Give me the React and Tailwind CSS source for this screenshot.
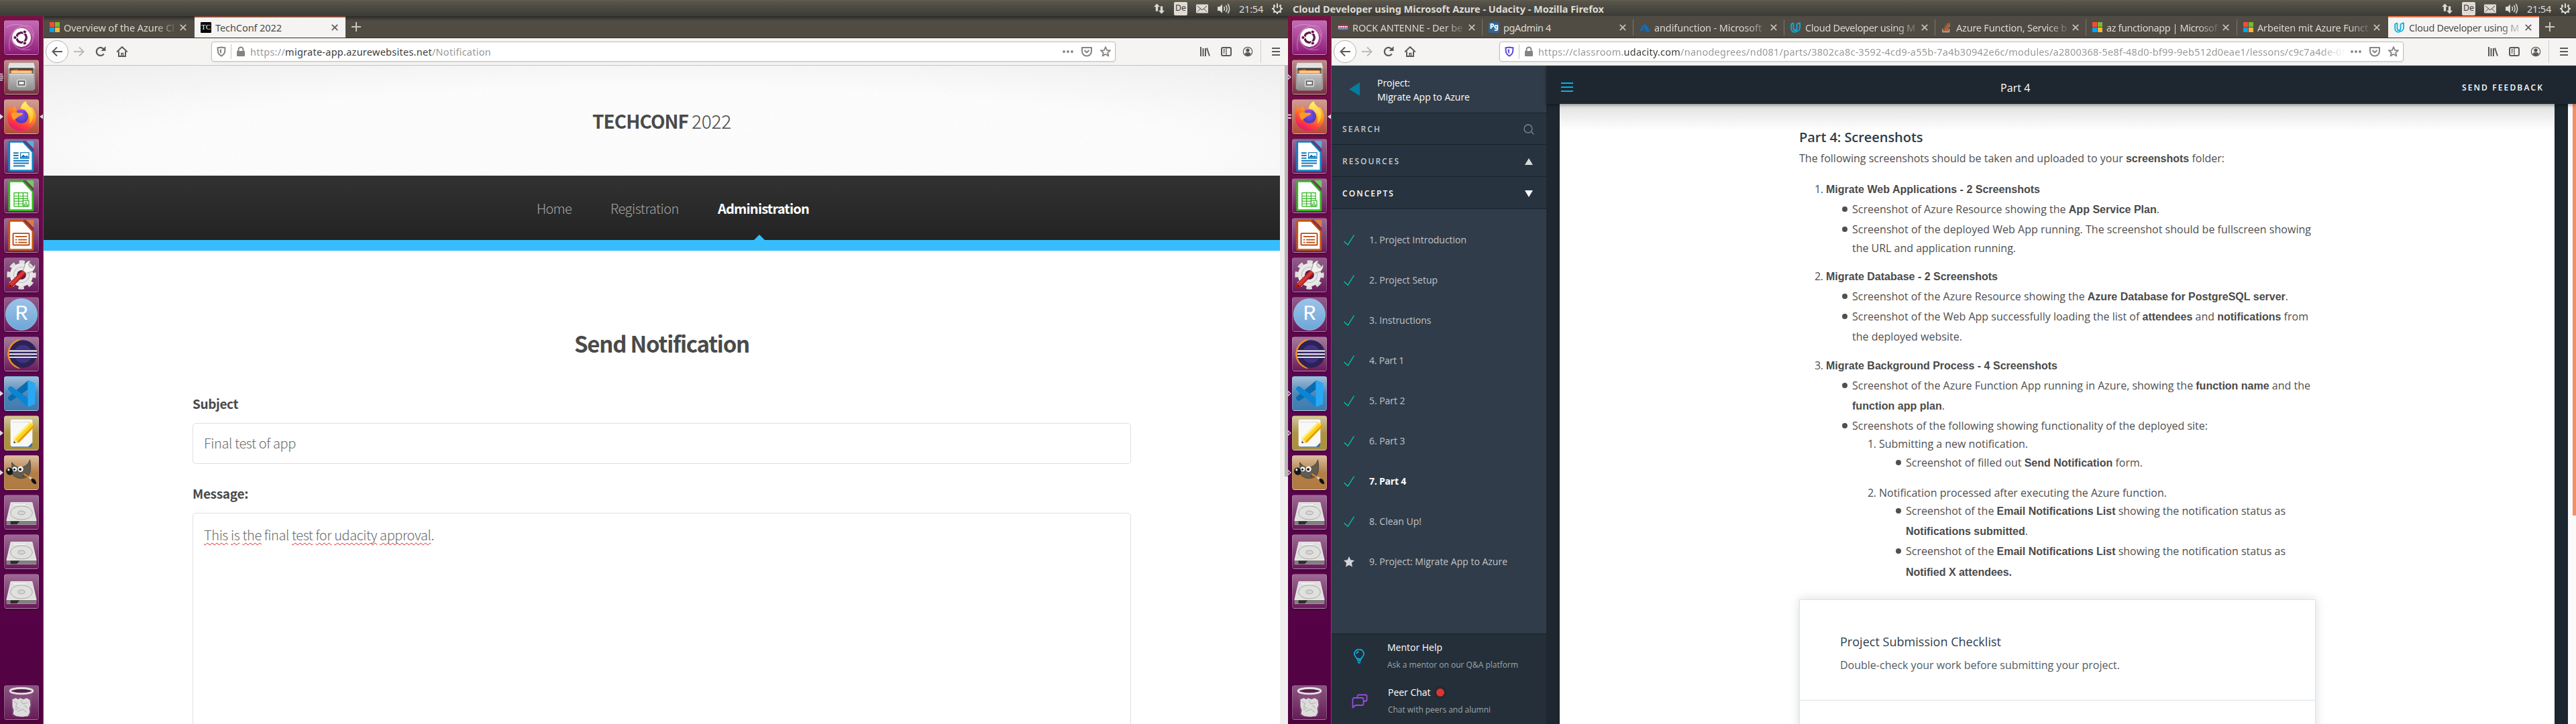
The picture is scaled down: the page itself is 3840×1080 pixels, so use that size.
import React, { useLayoutEffect, useRef, useState } from "react";

/* Text set to an exact advance width by adjusting its tracking. */
function Fit({ w, className = "", children }) {
  const ref = useRef(null);
  const [tracking, setTracking] = useState(0);
  useLayoutEffect(() => {
    const el = ref.current;
    el.style.letterSpacing = "0px";
    const natural = el.getBoundingClientRect().width;
    const next = (w - natural) / el.textContent.length;
    el.style.letterSpacing = next + "px";
    setTracking(next);
  }, [w]);
  return (
    <span ref={ref} className={"inline-block shrink-0 whitespace-pre " + className} style={{ letterSpacing: tracking + "px" }}>
      {children}
    </span>
  );
}

/* ---------- dock ---------- */

const UbuntuIcon = () => (
  <svg viewBox="0 0 52 52" className="size-full">
    <g fill="none" stroke="#e9b6df" strokeOpacity=".45" strokeWidth="1.3">
      <path d="M8 46C4 26 12 12 28 8s20 12 14 26M2 10c14-8 36-6 42 14 1 12-8 20-20 20M10 28c4 14 16 20 30 16" />
    </g>
    <circle cx="26" cy="26" r="14.5" fill="#fff" />
    <circle cx="26" cy="26" r="7.6" fill="none" stroke="#5e1a4d" strokeWidth="3.6" />
    <g stroke="#fff" strokeWidth="1.4">
      <path d="M26 26 13 26M26 26l6.5-11M26 26l6.5 11" />
    </g>
    <circle cx="26" cy="26" r="5.6" fill="#fff" />
    <g fill="#5e1a4d" stroke="#fff" strokeWidth="1">
      <circle cx="16" cy="26" r="2.7" />
      <circle cx="31" cy="17.2" r="2.7" />
      <circle cx="31" cy="34.8" r="2.7" />
    </g>
  </svg>
);

const FilesIcon = () => (
  <svg viewBox="0 0 52 52" className="size-full">
    <defs>
      <linearGradient id="cab" x1="0" y1="0" x2="0" y2="1">
        <stop offset="0" stopColor="#c4c4c4" />
        <stop offset="1" stopColor="#8b8b8b" />
      </linearGradient>
    </defs>
    <path d="M7 4h38l2 8v33H5V12z" fill="#9d9d9d" />
    <path d="M7 4h38l2 8H5z" fill="#e2e2e0" />
    <rect x="8" y="12" width="36" height="10" fill="#3c3b39" />
    <path d="M10 15l9-1 2 1h21v7H9z" fill="#e6834a" />
    <rect x="9" y="16" width="34" height="6" fill="#f09a3c" />
    <rect x="11" y="17.4" width="30" height="1.4" fill="#fff" />
    <rect x="7" y="21" width="38" height="26" fill="url(#cab)" />
    <rect x="7" y="21" width="38" height="1.4" fill="#dcdcdc" />
    <rect x="19" y="30" width="14" height="11" rx="2" fill="#bdbdbd" stroke="#d9d9d9" />
    <rect x="21.5" y="32.5" width="9" height="5.5" fill="#eee" stroke="#4a4a4a" strokeWidth="1.3" />
  </svg>
);

const FirefoxIcon = () => (
  <svg viewBox="0 0 52 52" className="size-full">
    <defs>
      <linearGradient id="fx" x1=".8" y1="0" x2=".3" y2="1">
        <stop offset="0" stopColor="#ffe24a" />
        <stop offset=".4" stopColor="#ff9a1f" />
        <stop offset=".75" stopColor="#ff3d3d" />
        <stop offset="1" stopColor="#e3127b" />
      </linearGradient>
      <linearGradient id="fxt" x1="0" y1="0" x2="0" y2="1">
        <stop offset="0" stopColor="#fff36b" />
        <stop offset="1" stopColor="#ffb52a" />
      </linearGradient>
      <radialGradient id="fxg" cx=".5" cy=".4" r=".6">
        <stop offset="0" stopColor="#7c4df5" />
        <stop offset="1" stopColor="#4b3ab8" />
      </radialGradient>
    </defs>
    <path d="M5 15c1-2 3-4 4-5 0 2 1 3 2 4 2-2 4-3 6-4-1 2 0 4 1 6h6c0-7 5-12 9-14 0 5 4 6 7 10l2-1c5 6 7 13 6 19-1 11-11 18-22 18S4 40 4 28c0-5 0-9 1-13z" fill="url(#fx)" />
    <path d="M25 13C26 7 30 3 33 2c0 5 5 7 9 13 4 8 2 18-4 22 3-10-1-20-13-24z" fill="url(#fxt)" />
    <circle cx="26" cy="26" r="10.5" fill="url(#fxg)" />
    <path d="M18 17c4-3 11-3 16 0-4 0-5 2-7 3z" fill="#9a3df0" />
    <path d="M10 21c4-2 9-2 11-1 3 0 6 0 8 1-2 3-5 4-8 5-2 3-5 3-6 6-3-3-5-7-5-11z" fill="#ff9b24" />
  </svg>
);

function OfficeIcon({ edge, light, dark, children }) {
  return (
    <svg viewBox="0 0 52 52" className="size-full">
      <path d="M8.500 2H31l14 16v30a2 2 0 0 1-2 2H8.500a3 3 0 0 1-3-3V5a3 3 0 0 1 3-3z" fill={edge} />
      <path d="M8.500 5H28l14 15v27H8.500z" fill="#fff" />
      <path d="M28 2l17 18V14L35 2z" fill="#6a1550" opacity=".55" />
      <path d="M33 2h10a2 2 0 0 1 2 2v10z" fill={light} />
      <g stroke={dark} fill="none" strokeWidth="2">{children}</g>
    </svg>
  );
}

const WriterIcon = () => (
  <OfficeIcon edge="#1181c3" light="#58aedd" dark="#0f77b8">
    <path d="M13.500 21h8M13.500 25h8M13.500 29h8M13.500 33h24M13.500 37h24M13.500 41h18" />
    <rect x="24.500" y="20.500" width="13" height="9" strokeWidth="1.200" />
    <path d="M25 28l4-4 3 3 2-2 3 3z" fill="#0f77b8" strokeWidth="1" />
  </OfficeIcon>
);
const CalcIcon = () => (
  <OfficeIcon edge="#33b821" light="#6fce5e" dark="#2db51c">
    <path d="M14.500 21.500h21v21h-21zM14.500 26.500h21M14.500 30.500h21M14.500 34.500h21M14.500 38.500h21M21.500 21v21M28.500 21v21" strokeWidth="1.200" />
    <rect x="28.500" y="33.500" width="9" height="9" fill="#fff" strokeWidth="1.200" />
    <path d="M30.500 42v-4M33 42v-7M35.500 42v-3" strokeWidth="1.400" />
  </OfficeIcon>
);
const ImpressIcon = () => (
  <OfficeIcon edge="#c45510" light="#dc7d44" dark="#b84a10">
    <rect x="13" y="23" width="25" height="18" rx="1" />
    <path d="M16.500 28h18M21 33h13.500M21 37h13.500M16.500 33h2.500M16.500 37h2.500" strokeWidth="1.800" />
  </OfficeIcon>
);

const SettingsIcon = () => (
  <svg viewBox="0 0 52 52" className="size-full">
    <circle cx="26" cy="26" r="19.500" fill="none" stroke="#dededc" strokeWidth="6" strokeDasharray="8.500 6.800" strokeDashoffset="4" />
    <circle cx="26" cy="26" r="12.500" fill="none" stroke="#e8e8e6" strokeWidth="11" />
    <circle cx="26" cy="26" r="12" fill="none" stroke="#bfbfbd" strokeWidth="1.200" />
    <circle cx="26" cy="26" r="7" fill="#5f1a4d" />
    <path d="M8.500 43l20-20" stroke="#a31717" strokeWidth="7.500" strokeLinecap="round" />
    <path d="M8.500 42.500l20-20" stroke="#d43a33" strokeWidth="5" strokeLinecap="round" />
    <circle cx="8.500" cy="43" r="1.700" fill="#6b0f0f" />
    <path d="M28 19c2-2 2-4 3-8 1-4 5-7 9-7l-3 6 2 4 4 1 4-5c1 4-1 9-5 11-3 1-6 1-8 3z" fill="#f1f1f0" stroke="#8a8a8a" strokeWidth=".900" />
  </svg>
);

const RIcon = () => (
  <div className="flex size-full items-center justify-center">
    <div className="flex size-12 items-center justify-center rounded-full border border-[#8cc0ea] bg-linear-to-b from-[#9cc3e8] to-[#6fa6d8] font-['Liberation_Mono',monospace] text-[32px] leading-none text-white">
      R
    </div>
  </div>
);

const EclipseIcon = () => (
  <svg viewBox="0 0 52 52" className="size-full">
    <path d="M23 3.500A23 23 0 0 0 23 48.500 25 25 0 0 1 23 3.500z" fill="#f8941e" stroke="#f8941e" />
    <circle cx="28.500" cy="26" r="21.500" fill="#2c2255" />
    <circle cx="28.500" cy="26" r="14" fill="#423285" />
    <path d="M7 21.300h43M7 26.200h43M7 31.100h43" stroke="#2c2255" strokeWidth="4" />
    <path d="M7 21.300h43M7 26.200h43M7 31.100h43" stroke="#fff" strokeWidth="2" />
  </svg>
);

const CodeIcon = () => (
  <svg viewBox="0 0 52 52" className="size-full">
    <path d="M36 6v14L11 37c-2 1-4 0-5-2s-1-3 0-4z" fill="#0a6cb0" />
    <path d="M6 17c1-2 4-3 6-1l24 17v14L6 21c-1-1-1-3 0-4z" fill="#0a86d4" />
    <path d="M36 5l11 5v32l-11 5z" fill="#29a8f3" />
  </svg>
);

const NotesIcon = () => (
  <svg viewBox="0 0 52 52" className="size-full">
    <rect x="9.500" y="6" width="33" height="42" rx="3" fill="#47719c" />
    <path d="M12 5h28a3 3 0 0 1 3 3v32l-7 7H12a3 3 0 0 1-3-3V8a3 3 0 0 1 3-3z" fill="#f8f8f6" />
    <path d="M12 9h28" stroke="#b9b9b9" strokeDasharray="1.500 1.500" />
    <path d="M43 40h-5a2 2 0 0 0-2 2v5z" fill="#fff" stroke="#ddd" strokeWidth=".600" />
    <path d="M14 35l6.500 6-6 .500z" fill="#e9cf9b" />
    <path d="M14 38.500l3 3h-3z" fill="#333" />
    <path d="M14 34L39 8.500l8 6.500-25 26z" fill="#fbd420" />
    <path d="M19 39.500L45 13l2 2-25 26z" fill="#e39d0c" />
    <path d="M14 34L39 8.500l2 2L16 36z" fill="#fff07a" />
  </svg>
);

const GimpIcon = () => (
  <svg viewBox="0 0 52 52" className="size-full">
    <path d="M11 10c3 4 7 8 12 8 8 0 14-5 16-12 2 10 2 22-4 26-7 5-18 3-23-3z" fill="#625c50" stroke="#3c382f" strokeWidth=".800" />
    <circle cx="15.500" cy="20.500" r="3.600" fill="#f4f4f4" />
    <circle cx="24.500" cy="20.500" r="4.400" fill="#f4f4f4" />
    <circle cx="15" cy="21" r="1.600" fill="#111" />
    <circle cx="24" cy="21" r="2" fill="#111" />
    <ellipse cx="7.500" cy="24" rx="5.200" ry="6" fill="#14181b" transform="rotate(-20 7.500 24)" />
    <ellipse cx="6" cy="21.500" rx="1.600" ry="2" fill="#e8eef2" />
    <path d="M28 29c4 0 2 2 0 3" stroke="#222" fill="none" />
    <path d="M29 28l10 6" stroke="#e08a2a" strokeWidth="2.200" />
    <path d="M38 33l4 3" stroke="#ccc" strokeWidth="3.400" />
    <path d="M41 36c4-2 8 2 8 8-4 0-8-3-8-8z" fill="#0e0e0e" />
  </svg>
);

const DriveIcon = () => (
  <svg viewBox="0 0 52 52" className="size-full">
    <path d="M9.500 11h33l6.500 28v6.500H3V39z" fill="#c9c9c7" />
    <path d="M9.500 11h33L49 39H3z" fill="#dfdfdd" stroke="#f3f3f2" strokeWidth=".800" />
    <ellipse cx="26" cy="27" rx="17" ry="10.500" fill="#e0e0de" stroke="#a4a4a2" />
    <ellipse cx="26" cy="27" rx="5.500" ry="3" fill="#d6d6d4" stroke="#a4a4a2" />
    <path d="M14 14c6 0 14 2 18 0" stroke="#f6f6f6" strokeWidth="1.500" fill="none" />
    <path d="M3 39.500h46V45H3z" fill="#7f7f7d" />
    <path d="M9 40h14l-4 5H9z" fill="#2d2d2d" />
    <path d="M3 39h46" stroke="#f5f5f5" />
  </svg>
);

const TrashIcon = () => (
  <svg viewBox="0 0 52 52" className="size-full">
    <path d="M9 11h34l-3 36c-6 2-22 2-28 0z" fill="#8f5a86" opacity=".45" />
    <ellipse cx="26" cy="8" rx="17.500" ry="4.300" fill="#5b1f50" stroke="#e4e4e2" strokeWidth="3" />
    <path d="M12 21l5-2 4 2 3-2 5 2 5-2 5 3 1 8-2 5 1 6-3 6-9 1-9-1-5-3 1-6-2-6z" fill="#dcdcdb" />
    <path d="M14 24l5 3-2 6 6 2M25 22l3 6 8-2M20 40l8-4 6 5M30 30l5 4M16 36l4 1" stroke="#b4b4b4" fill="none" strokeWidth="1.200" />
  </svg>
);

const apps = [
  { Icon: UbuntuIcon, tile: "from-[#c46bb6] to-[#8f1878]" },
  { Icon: FilesIcon, tile: "from-[#c08b8d] to-[#7c2f40]", many: true },
  { Icon: FirefoxIcon, tile: "from-[#d19c92] to-[#b54a35]", many: true, focus: true },
  { Icon: WriterIcon, tile: "from-[#9d6a95] to-[#6b195c]" },
  { Icon: CalcIcon, tile: "from-[#9d6a95] to-[#6b195c]" },
  { Icon: ImpressIcon, tile: "from-[#9d6a95] to-[#6b195c]" },
  { Icon: SettingsIcon, tile: "from-[#935c8b] to-[#6b195c]" },
  { Icon: RIcon, tile: "from-[#935c8b] to-[#6b195c]" },
  { Icon: EclipseIcon, tile: "from-[#a57a9e] to-[#6b195c]" },
  { Icon: CodeIcon, tile: "from-[#a5bfd6] via-[#4f86b8] to-[#3f7bb0]", running: true },
  { Icon: NotesIcon, tile: "from-[#d3c79c] via-[#ad9345] to-[#a98f3d]", running: true },
  { Icon: GimpIcon, tile: "from-[#dcbf9f] via-[#b37d46] to-[#b07a42]", running: true },
  { Icon: DriveIcon, tile: "from-[#9d6a95] to-[#6b195c]" },
  { Icon: DriveIcon, tile: "from-[#9d6a95] to-[#6b195c]" },
  { Icon: DriveIcon, tile: "from-[#9d6a95] to-[#6b195c]" },
];

const Tile = ({ Icon, tile }) => (
  <div className={"size-[52px] overflow-hidden rounded-[4px] border border-white/20 bg-linear-to-b shadow-[0_1px_3px_rgba(0,0,0,0.4)] " + tile}>
    <Icon />
  </div>
);

function Marker({ kind }) {
  return (
    <svg viewBox="0 0 6 12" className="absolute top-5 left-0 h-3 w-1.5">
      {kind === "lines3" && <path d="M0 1.500h4M0 4.500h5M0 7.500h5M0 10.500h4" stroke="#ddd" strokeWidth="1.500" />}
      {kind === "lines2" && <path d="M0 3.500h5M0 8h5" stroke="#ddd" strokeWidth="1.800" />}
      {kind === "solid" && <path d="M0 2l5 4-5 4z" fill="#ddd" />}
      {kind === "hollow" && <path d="M0 2.500l4 3.500-4 3.500z" fill="none" stroke="#ddd" strokeWidth="1.200" />}
    </svg>
  );
}

function Dock({ second }) {
  const markerFor = (app, i) => {
    if (i === 1) return second ? "hollow" : "lines3";
    if (i === 2) return second ? "lines2" : "solid";
    return app.running ? (second ? "hollow" : "solid") : null;
  };
  return (
    <aside className="flex h-[1056px] w-[65px] shrink-0 flex-col border-r border-[#8c3c6e] bg-linear-to-b from-[#7a0f43] via-[#5c0550] to-[#520242] pt-1.5 pb-1.5">
      <div className="flex flex-col gap-[7px]">
        {apps.map((app, i) => (
          <div key={i} className="relative pl-1.5">
            <Marker kind={markerFor(app, i)} />
            <Tile {...app} />
            {app.focus && (
              <svg viewBox="0 0 6 12" className="absolute top-5 right-0 h-3 w-1.5">
                <path d="M6 2.500L1 6l5 3.500z" fill="#ddd" />
              </svg>
            )}
          </div>
        ))}
      </div>
      <div className="mt-auto pl-1.5">
        <Tile Icon={TrashIcon} tile="from-[#8b5583] to-[#641a55]" />
      </div>
    </aside>
  );
}

/* ---------- system bar ---------- */

function SystemBar({ title }) {
  return (
    <div className="flex h-6 shrink-0 items-center border-t border-[#615e4e] bg-linear-to-b from-[#59564d] to-[#3c3b37] pr-[7px] text-[#dfdbd2]">
      {title && (
        <Fit w={464} className="ml-[7px] text-[14.5px] leading-5 font-bold">
          {title}
        </Fit>
      )}
      <svg viewBox="0 0 18 18" className="ml-auto size-[18px]" fill="currentColor">
        <path d="M5.500 1l5 5.500H7.500V13h-4V6.500H.500zM12.500 17l-5-5.500h3V5h4v6.500h3z" stroke="#45433c" strokeWidth=".600" />
      </svg>
      <div className="ml-[13px] flex h-5 w-5 items-center justify-center rounded-[2px] bg-[#dfdbd2] text-[12.5px] leading-none text-[#3c3b37]">De</div>
      <svg viewBox="0 0 18 14" className="ml-[13px] h-3.5 w-[18px]">
        <rect width="18" height="13" y=".500" rx="1" fill="#dfdbd2" />
        <path d="M2 3l7 6 7-6M2 11.500l4.500-4.500M16 11.500L11.500 7" stroke="#45433c" fill="none" />
      </svg>
      <svg viewBox="0 0 20 18" className="ml-3.5 h-[18px] w-5" fill="none" stroke="currentColor" strokeWidth="1.500">
        <path d="M0 6h3l4-3.500v13L3 12H0z" fill="currentColor" stroke="none" />
        <path d="M9.500 6c1.300 2 1.300 4 0 6M12.300 4c2.200 3 2.200 7 0 10M15.300 2c3 4.500 3 9.500 0 14" />
      </svg>
      <Fit w={36} className="ml-3 text-[14.5px] leading-5">21:54</Fit>
      <svg viewBox="0 0 18 18" className="ml-3 size-[18px]" fill="none" stroke="currentColor">
        <path d="M6 4.300a5.500 5.500 0 1 0 6 0" strokeWidth="2" />
        <path d="M9 1v7" strokeWidth="2" />
        <path d="M1 9h2M15 9h2M3.300 3.300l1.500 1.500M14.700 3.300l-1.500 1.500M3.300 14.700l1.500-1.500M14.700 14.700l-1.500-1.500M9 15v2" strokeWidth="2" />
      </svg>
    </div>
  );
}

/* ---------- browser chrome ---------- */

const MsIcon = () => (
  <div className="grid size-[15px] grid-cols-2 gap-px">
    <i className="bg-[#f94b31]" />
    <i className="bg-[#7cb832]" />
    <i className="bg-[#05a4ee]" />
    <i className="bg-[#fbb435]" />
  </div>
);
const TcIcon = () => (
  <div className="flex size-4 items-center justify-center rounded-[1px] bg-black font-['Liberation_Serif',serif] text-[11px] leading-none text-white">TC</div>
);
const RockIcon = () => (
  <svg viewBox="0 0 16 16" className="size-4">
    <path d="M0 5q8-2 16 0v4H0z" fill="#ea1d3c" />
    <path d="M0 9h16v2q-8 2-16 0z" fill="#1c76b8" />
    <path d="M1 7h14" stroke="#fff" strokeWidth="2" strokeDasharray="2.500 .800" />
    <path d="M1 9.800h14" stroke="#fff" strokeWidth="1" strokeDasharray="1 .700" />
  </svg>
);
const PgIcon = () => (
  <div className="flex size-4 items-center justify-center rounded-[2px] bg-[#326690] pb-0.5 text-[10.5px] leading-none font-extrabold tracking-[-0.5px] text-white">Pg</div>
);
const AzureIcon = () => (
  <svg viewBox="0 0 16 16" className="size-4">
    <path d="M8.500 2L4 6 .500 13h3.800z" fill="#0f6fc0" />
    <path d="M9 3l-2.200 6L10.500 13 4 14h12z" fill="#0f6fc0" />
  </svg>
);
const UdacityIcon = () => (
  <svg viewBox="0 0 16 16" className="size-4" fill="none" stroke="#06b3e0" strokeWidth="1.800" strokeLinejoin="round">
    <path d="M4.500 1.200L1.200 3v6.500c0 3.500 2.300 5.300 4.800 5.300 1.500 0 2.500-.500 3-1.200" />
    <path d="M4.500 1.200v8c0 2 1 3 2.500 3s2.500-1 2.500-3V3l4.500-1.800V8c0 3-2 5.500-5 5.800" />
  </svg>
);
const StackIcon = () => (
  <svg viewBox="0 0 16 16" className="size-4" fill="none">
    <path d="M2 10v4.500h9.500V10" stroke="#bcbbbb" strokeWidth="1.300" />
    <path d="M4 12.500h6M4 10.200l6 .700M4.600 7.500l5.600 1.900M6 4.700l5 3.500M8.300 2.400l3.500 4.700M11.200 1l1.300 5.500" stroke="#f0662c" strokeWidth="1.300" />
  </svg>
);

const CloseIcon = () => (
  <svg viewBox="0 0 10 10" className="size-2.5" fill="none" stroke="currentColor" strokeWidth="1.700">
    <path d="M.8.8l8.400 8.400M9.200.8L.8 9.200" />
  </svg>
);

function Tab({ icon, text, w, active, accent = "", sep, shade }) {
  return (
    <div
      className={
        "relative flex w-[225px] shrink-0 items-center pl-[9px] pt-px " +
        (active ? "bg-[#f5f4f2] text-[#4c4b49] " : "text-[#dbd8d1] ")
      }
    >
      {active && <div className={"absolute inset-x-0 top-0 " + accent} />}
      {sep && <div className="absolute top-[5px] right-0 h-6 w-px bg-[#7a776f]" />}
      {icon}
      <div
        className={
          "ml-1.5 w-[167px] overflow-hidden text-[14.5px] leading-6 " +
          (shade ? "[mask-image:linear-gradient(to_right,black_82%,rgba(0,0,0,0.15))]" : "")
        }
      >
        <Fit w={w}>{text}</Fit>
      </div>
      <div className={"ml-1.5 " + (active ? "text-[#5d5c5a]" : "text-[#c5c2bb]")}>
        <CloseIcon />
      </div>
    </div>
  );
}

const PlusIcon = () => (
  <svg viewBox="0 0 14 14" className="size-3.5 self-center text-[#c9c6bf]" stroke="currentColor" strokeWidth="2">
    <path d="M7 0v14M0 7h14" />
  </svg>
);

function Toolbar({ secure, children }) {
  return (
    <div className="flex h-[41px] shrink-0 items-center border-b border-[#c6c2be] bg-[#f5f4f2] text-[#5b5a58]">
      <div className="ml-[3px] flex size-[34px] shrink-0 items-center justify-center rounded-full border border-[#b5b3b0] bg-[#fdfdfd]">
        <svg viewBox="0 0 16 16" className="size-4" fill="none" stroke="currentColor" strokeWidth="2">
          <path d="M16 8H1.500M8 1.500L1.500 8 8 14.500" />
        </svg>
      </div>
      <svg viewBox="0 0 16 16" className="ml-2 size-4 text-[#bdbbb9]" fill="none" stroke="currentColor" strokeWidth="2">
        <path d="M0 8h14.500M8 1.500L14.500 8 8 14.500" />
      </svg>
      <svg viewBox="0 0 16 16" className="ml-4 size-4" fill="none" stroke="currentColor" strokeWidth="2.200">
        <path d="M12.800 11.300A6 6 0 1 1 13 5" />
        <path d="M15.500 0v7h-7z" fill="currentColor" stroke="none" />
      </svg>
      <svg viewBox="0 0 16 16" className="ml-4 size-4" fill="none" stroke="currentColor" strokeWidth="2">
        <path d="M0 8.500L8 1l8 7.500M3 7.500V15h10V7.500" />
        <path d="M7 15v-4.500h2.500V15" strokeWidth="1.500" />
      </svg>
      <div className="ml-[125px] flex h-[30px] w-[1348px] items-center rounded-[4px] border border-[#c3c0bc] bg-white pr-1.5 pl-1.5 text-[#858483] shadow-[0_1px_3px_rgba(0,0,0,0.08)]">
        <svg viewBox="0 0 16 16" className={"size-4 shrink-0 " + (secure ? "text-[#5b4be0]" : "text-[#858483]")} fill="none" stroke="currentColor" strokeWidth="2">
          <path d="M8 1.500c2 .500 4 .800 5.500.800 0 6-.500 10-5.500 12.200C3 12.300 2.500 8.300 2.500 2.300 4 2.300 6 2 8 1.500z" />
          <path d="M8 4.500v7c-2-1.300-2.500-3.500-2.500-6.500z" fill="currentColor" stroke="none" />
        </svg>
        <div className="ml-1.5 h-[22px] w-px bg-[#c9c7c4]" />
        <svg viewBox="0 0 16 16" className="ml-1.5 size-4 shrink-0" fill="none">
          <path d="M4.500 8V5a3.500 3.500 0 0 1 7 0v3" stroke="currentColor" strokeWidth="2" />
          <rect x="2" y="7" width="12" height="8" rx="1" fill="currentColor" />
        </svg>
        <div className="ml-1.5 flex w-[1206px] overflow-hidden text-[14.5px] leading-6 text-[#9a9998]">{children}</div>
        <svg viewBox="0 0 16 16" className="ml-auto size-4" fill="currentColor">
          <circle cx="2" cy="8" r="1.900" />
          <circle cx="8" cy="8" r="1.900" />
          <circle cx="14" cy="8" r="1.900" />
        </svg>
        <svg viewBox="0 0 16 16" className="ml-3 size-4" fill="none" stroke="currentColor" strokeWidth="2">
          <path d="M1 2h14v5.500a7 7 0 0 1-14 0z" strokeLinejoin="round" />
          <path d="M4.500 6L8 9.300 11.500 6" />
        </svg>
        <svg viewBox="0 0 16 16" className="ml-3 size-4" fill="none" stroke="currentColor" strokeWidth="1.800" strokeLinejoin="round">
          <path d="M8 1l2 4.800 5 .400-3.800 3.300 1.200 5L8 11.800l-4.400 2.700 1.200-5L1 6.200l5-.400z" />
        </svg>
      </div>
      <svg viewBox="0 0 16 16" className="ml-[125px] size-4" stroke="currentColor" strokeWidth="2">
        <path d="M2 1v14M5.500 3v12M9 3v12M11 2.500l4 12" />
      </svg>
      <svg viewBox="0 0 16 16" className="ml-4 size-4" fill="none" stroke="currentColor" strokeWidth="2">
        <rect x="1" y="2" width="14" height="12" rx="2" />
        <path d="M8 2v12M3.500 5h2.500M3.500 7.500h2.500M3.500 10h2" strokeWidth="1.300" />
      </svg>
      <svg viewBox="0 0 16 16" className="ml-4 size-4" fill="none" stroke="currentColor">
        <circle cx="8" cy="8" r="6.700" strokeWidth="1.200" />
        <circle cx="8" cy="6" r="2.700" fill="currentColor" stroke="none" />
        <path d="M3.500 11.500c0-1.500 1.500-2 2.500-2.300h4c1 .300 2.500.800 2.500 2.300a5 5 0 0 1-9 0z" fill="currentColor" stroke="none" />
      </svg>
      <div className="ml-[11px] h-[34px] w-px bg-[#d2cfcc]" />
      <svg viewBox="0 0 16 16" className="ml-3.5 size-4" stroke="currentColor" strokeWidth="2">
        <path d="M2 3h12M2 8h12M2 13h12" />
      </svg>
    </div>
  );
}

/* ---------- conference page ---------- */

const Wavy = ({ children }) => (
  <span className="underline decoration-[#e01b1b] decoration-wavy decoration-1 underline-offset-[3px] [text-decoration-skip-ink:none]">{children}</span>
);

function ConferencePage() {
  return (
    <div className="flex h-[982px] overflow-hidden font-['Noto_Sans_CJK_SC',sans-serif] text-[#4a4a4a]">
      <div className="flex w-[1843px] flex-col bg-white">
        <header className="relative flex h-[164px] shrink-0 items-center justify-center bg-[radial-gradient(ellipse_75%_100%_at_50%_75%,#ffffff_55%,#ececec_115%)] text-[28px]">
          <svg className="absolute inset-0 size-full opacity-10">
            <filter id="grain">
              <feTurbulence type="fractalNoise" baseFrequency="0.7" numOctaves="2" />
              <feColorMatrix type="saturate" values="0" />
            </filter>
            <rect width="100%" height="100%" filter="url(#grain)" />
          </svg>
          <h1 className="relative flex">
            <Fit w={143} className="font-bold">TECHCONF</Fit>
            <Fit w={59} className="ml-[5px] font-light">2022</Fit>
          </h1>
        </header>
        <nav className="flex h-24 shrink-0 items-center bg-linear-to-b from-[#323232] to-[#232323] pt-0.5 pl-[735px] text-[20px] font-light text-[#a5a5a5]">
          <Fit w={52}>Home</Fit>
          <Fit w={102} className="ml-[58px]">Registration</Fit>
          <div className="relative ml-[58px] flex h-full items-center font-bold text-white">
            <Fit w={136}>Administration</Fit>
            <div className="absolute bottom-0 left-[54px] h-0 w-0 border-x-8 border-b-8 border-x-transparent border-b-[#37bdfb]" />
          </div>
        </nav>
        <div className="h-4 shrink-0 bg-[#37bdfb]" />
        <main className="flex flex-1 flex-col px-[222px] text-[20px] font-light">
          <h2 className="mt-[113px] text-center text-[33px] leading-[50px] font-bold">
            <Fit w={261}>Send Notification</Fit>
          </h2>
          <label className="mt-[51px] text-[19px] leading-7 font-bold">
            <Fit w={68}>Subject</Fit>
          </label>
          <div className="mt-[15px] flex h-[61px] shrink-0 items-center rounded-[5px] border border-[#dfdfdf] px-4 pb-px text-[#6a6a6a]">
            <Fit w={137}>Final test of app</Fit>
          </div>
          <label className="mt-[30px] text-[19px] leading-7 font-bold">
            <Fit w={83}>Message:</Fit>
          </label>
          <div className="mt-[15px] h-[420px] shrink-0 rounded-t-[5px] border border-[#dfdfdf] px-4 pt-4 leading-8 text-[#6a6a6a]">
            <Fit w={343}>
              <Wavy>This</Wavy> <Wavy>is</Wavy> <Wavy>the</Wavy> final <Wavy>test</Wavy> <Wavy>for</Wavy> <Wavy>udacity</Wavy> <Wavy>approval</Wavy>.
            </Fit>
          </div>
        </main>
      </div>
      <div className="w-3 bg-[#f0efee] pl-[7px]">
        <div className="h-[613px] w-[5px] bg-[#b9b9b8]" />
      </div>
    </div>
  );
}

/* ---------- classroom page ---------- */

const lessons = [
  ["1. Project Introduction", 145],
  ["2. Project Setup", 102],
  ["3. Instructions", 92.5],
  ["4. Part 1", 52],
  ["5. Part 2", 53.5],
  ["6. Part 3", 53.5],
  ["7. Part 4", 55],
  ["8. Clean Up!", 78],
  ["9. Project: Migrate App to Azure", 206],
];

function Sidebar() {
  return (
    <aside className="flex w-80 shrink-0 flex-col bg-[#303c49] text-[14px] text-white">
      <div className="flex h-[71px] shrink-0 items-center border-b border-[#17212b] pl-[26px]">
        <svg viewBox="0 0 16 20" className="h-5 w-4"><path d="M16 0v20L0 10z" fill="#067c9f" /></svg>
        <div className="ml-[26px] pt-0.5 leading-[21px]">
          <div><Fit w={49}>Project:</Fit></div>
          <div><Fit w={138}>Migrate App to Azure</Fit></div>
        </div>
      </div>
      <div className="flex h-[47px] shrink-0 items-center justify-between border-b border-[#17212b] bg-[#273440] pt-0.5 pr-[18px] pl-4 text-[12px] font-semibold text-[#c5c9ce]">
        <Fit w={58}>SEARCH</Fit>
        <svg viewBox="0 0 16 16" className="size-4" fill="none" stroke="#7d868f" strokeWidth="1.300">
          <circle cx="7" cy="7" r="6" />
          <path d="M11.500 11.500L15.500 15.500" />
        </svg>
      </div>
      <div className="flex h-12 shrink-0 items-center justify-between border-b border-[#17212b] bg-[#273440] pt-0.5 pr-5 pl-4 text-[12px] font-semibold text-[#c5c9ce]">
        <Fit w={86}>RESOURCES</Fit>
        <svg viewBox="0 0 12 10" className="h-2.5 w-3"><path d="M6 0l6 10H0z" fill="#d5d8db" /></svg>
      </div>
      <div className="flex h-12 shrink-0 items-center justify-between border-b border-[#17212b] bg-[#273440] pt-0.5 pr-5 pl-4 text-[12px] font-semibold">
        <Fit w={78}>CONCEPTS</Fit>
        <svg viewBox="0 0 12 10" className="h-2.5 w-3"><path d="M0 0h12L6 10z" fill="#fff" /></svg>
      </div>
      <ul className="h-[633px] shrink-0 pt-[15px] text-[#c0c4c9]">
        {lessons.map(([text, w], i) => (
          <li key={text} className={"flex h-[60px] items-center pl-[18px] " + (i === 6 ? "font-bold text-white" : "")}>
            {i < 8 ? (
              <svg viewBox="0 0 16 16" className="size-4 translate-y-px" fill="none" stroke="#02c3a9" strokeWidth="1.400">
                <path d="M.5 10L6.300 15.300 15.500.5" />
              </svg>
            ) : (
              <svg viewBox="0 0 16 16" className="size-4 translate-y-px" fill="#d2d5d8">
                <path d="M8 0l2.400 5.300 5.600.700-4.100 3.800 1.100 5.900L8 12.800l-5 2.900 1.100-5.900L0 6l5.600-.700z" />
              </svg>
            )}
            <Fit w={w} className="ml-[22px]">{text}</Fit>
          </li>
        ))}
      </ul>
      <div className="flex-1 border-t border-[#17212b] bg-[#242f39] pt-2">
        <div className="flex h-[67px] pl-[31px]">
          <svg viewBox="0 0 20 22" className="mt-3.5 h-[22px] w-5" fill="none" stroke="#0ea9dc" strokeWidth="1.800">
            <path d="M7 15c0-2-4-3.500-4-7.500a7 7 0 0 1 14 0c0 4-4 5.500-4 7.500zM7 17.500h6M8 20.500h4M6.500 7a3.500 3.500 0 0 1 3-3" />
          </svg>
          <div className="ml-8">
            <div className="h-[26px] leading-6"><Fit w={82}>Mentor Help</Fit></div>
            <div className="text-[12px] leading-6 text-[#9fa5ab]"><Fit w={195}>Ask a mentor on our Q&amp;A platform</Fit></div>
          </div>
        </div>
        <div className="flex pl-[30px]">
          <svg viewBox="0 0 24 22" className="mt-3.5 h-[22px] w-6" fill="none" stroke="#9a4ae0" strokeWidth="1.800" strokeLinejoin="round">
            <path d="M1.500 20.500V8a2 2 0 0 1 2-2h12a2 2 0 0 1 2 2v7a2 2 0 0 1-2 2H5.500z" />
            <path d="M8.500 6V3.500a2 2 0 0 1 2-2h10a2 2 0 0 1 2 2V9a2 2 0 0 1-2 2h-3" />
          </svg>
          <div className="ml-[30px]">
            <div className="flex h-[26px] items-start leading-6">
              <Fit w={63.5}>Peer Chat</Fit>
              <span className="mt-1.5 ml-2 size-3 rounded-full bg-[#e0352f] shadow-[0_0_4px_rgba(0,0,0,0.5)]" />
            </div>
            <div className="text-[12px] leading-6 text-[#9fa5ab]"><Fit w={153}>Chat with peers and alumni</Fit></div>
          </div>
        </div>
      </div>
    </aside>
  );
}

const B = ({ children }) => <b className="font-['Liberation_Sans',sans-serif] font-bold text-[#4a4a4a]">{children}</b>;

function Bullet({ w, className = "", inner, plain, children }) {
  return (
    <div className={"flex h-7 items-center " + (inner ? "pl-[144px] " : "pl-16 ") + className}>
      <span className={"size-2 shrink-0 rounded-full " + (plain ? "bg-transparent" : "bg-[#4f4f4f]")} />
      <Fit w={w} className="ml-[7px]">{children}</Fit>
    </div>
  );
}

function Numbered({ n, w, className = "", children }) {
  return (
    <div className={"flex h-7 items-center " + className}>
      <span className="w-[17px] tracking-[-0.5px]">{n}.</span>
      <Fit w={w}>{children}</Fit>
    </div>
  );
}

function Lesson() {
  return (
    <div className="relative w-[1483px] shrink-0 overflow-hidden bg-white pl-[357px] text-[16px] leading-7 text-[#525c65]">
      <div className="absolute inset-x-0 top-0 h-10 bg-linear-to-b from-black/12 to-transparent" />
      <div className="w-[770px] text-[#4f4f4f]">
        <h2 className="mt-[35px] text-[20px] leading-[29px] font-semibold text-[#2e3d49]">
          <Fit w={184.5}>Part 4: Screenshots</Fit>
        </h2>
        <div className="mt-[3px]">
          <Fit w={634}>The following screenshots should be taken and uploaded to your <B>screenshots</B> folder:</Fit>
        </div>
        <Numbered n={1} w={319} className="mt-[17px] pl-[23px]"><B>Migrate Web Applications - 2 Screenshots</B></Numbered>
        <Bullet w={458} className="mt-0.5">Screenshot of Azure Resource showing the <B>App Service Plan</B>.</Bullet>
        <Bullet w={684} className="mt-0.5">Screenshot of the deployed Web App running. The screenshot should be fullscreen showing</Bullet>
        <Bullet w={244} plain>the URL and application running.</Bullet>
        <Numbered n={2} w={256} className="mt-3.5 pl-[23px]"><B>Migrate Database - 2 Screenshots</B></Numbered>
        <Bullet w={650} className="mt-0.5">Screenshot of the Azure Resource showing the <B>Azure Database for PostgreSQL server</B>.</Bullet>
        <Bullet w={680} className="mt-0.5">Screenshot of the Web App successfully loading the list of <B>attendees</B> and <B>notifications</B> from</Bullet>
        <Bullet w={164} className="mt-0.5" plain>the deployed website.</Bullet>
        <Numbered n={3} w={345} className="mt-[15px] pl-[23px]"><B>Migrate Background Process - 4 Screenshots</B></Numbered>
        <Bullet w={683} className="mt-0.5">Screenshot of the Azure Function App running in Azure, showing the <B>function name</B> and the</Bullet>
        <Bullet w={138} className="mt-0.5" plain><B>function app plan</B>.</Bullet>
        <Bullet w={530} className="mt-0.5">Screenshots of the following showing functionality of the deployed site:</Bullet>
        <Numbered n={1} w={222} className="-mt-px pl-[102px]">Submitting a new notification.</Numbered>
        <Bullet inner w={353}>Screenshot of filled out <B>Send Notification</B> form.</Bullet>
        <Numbered n={2} w={429} className="mt-[17px] pl-[102px]">Notification processed after executing the Azure function.</Numbered>
        <Bullet inner w={566} className="-mt-px">Screenshot of the <B>Email Notifications List</B> showing the notification status as</Bullet>
        <Bullet inner w={182} className="mt-0.5" plain><B>Notifications submitted</B>.</Bullet>
        <Bullet inner w={566} className="mt-0.5">Screenshot of the <B>Email Notifications List</B> showing the notification status as</Bullet>
        <Bullet inner w={158} className="mt-[3px]" plain><B>Notified X attendees.</B></Bullet>
        <section className="mt-[27px] h-[260px] border border-[#dbe2e8] shadow-[0_0_14px_rgba(46,61,73,0.18)]">
          <div className="h-[150px] border-b border-[#dbe2e8] pt-12 pl-[60px]">
            <div className="text-[18px] leading-7 text-[#2e3d49]"><Fit w={240}>Project Submission Checklist</Fit></div>
            <div className="mt-[7px] text-[#525c65]"><Fit w={417}>Double-check your work before submitting your project.</Fit></div>
          </div>
        </section>
      </div>
    </div>
  );
}

function ClassroomPage() {
  return (
    <div className="flex h-[982px] overflow-hidden font-['Open_Sans',sans-serif]">
      <Sidebar />
      <div className="flex flex-1 flex-col bg-[#1e272f]">
        <div className="relative z-10 flex h-[57px] shrink-0 items-center bg-[#1e272f] pr-12 text-[14px] text-white shadow-[0_2px_5px_rgba(0,0,0,0.35)]">
          <svg viewBox="0 0 18 14" className="mt-1.5 ml-[22px] h-3.5 w-[18px]" stroke="#05b3e3" strokeWidth="2">
            <path d="M0 1h18M0 7h18M0 13h18" />
          </svg>
          <div className="ml-[637px] pt-2"><Fit w={44.5} className="text-[16px]">Part 4</Fit></div>
          <div className="ml-auto pt-2 text-[12px] font-semibold"><Fit w={122}>SEND FEEDBACK</Fit></div>
        </div>
        <div className="flex flex-1 overflow-hidden pl-5">
          <Lesson />
          <div className="w-5 shrink-0 bg-[#1c262f]" />
          <div className="flex w-3 shrink-0 justify-end bg-[#fafafa]">
            <div className="h-[614px] w-[5px] bg-[#f68e66]" />
          </div>
        </div>
      </div>
    </div>
  );
}

/* ---------- desktop ---------- */

export default function App() {
  return (
    <div className="flex h-[1080px] w-[3840px] overflow-hidden bg-[#520242] font-['Noto_Sans',sans-serif]">
      <div className="flex w-[1920px] flex-col">
        <SystemBar />
        <div className="flex">
          <Dock />
          <div className="flex w-[1855px] flex-col">
            <div className="flex h-[33px] shrink-0 border-b border-[#32302b] bg-[linear-gradient(to_bottom,#2b2a26,#504c44_22%)]">
              <Tab icon={<MsIcon />} text="Overview of the Azure Cl" w={165} shade />
              <Tab icon={<TcIcon />} text="TechConf 2022" w={99} active accent="h-[2px] bg-[#8a4b37]" />
              <div className="ml-[9px] flex"><PlusIcon /></div>
            </div>
            <Toolbar>
              <Fit w={359}>https://<span className="text-[#3d3c3a]">migrate-app.azurewebsites.net</span>/Notification</Fit>
            </Toolbar>
            <ConferencePage />
          </div>
        </div>
      </div>
      <div className="flex w-[1920px] flex-col">
        <SystemBar title="Cloud Developer using Microsoft Azure - Udacity - Mozilla Firefox" />
        <div className="flex">
          <Dock second />
          <div className="flex w-[1855px] flex-col">
            <div className="flex h-[33px] shrink-0 border-b border-[#32302b] bg-[#504c44]">
              <Tab icon={<RockIcon />} text="ROCK ANTENNE - Der be" w={164} sep shade />
              <Tab icon={<PgIcon />} text="pgAdmin 4" w={71} sep />
              <Tab icon={<AzureIcon />} text="andifunction - Microsoft" w={160} sep shade />
              <Tab icon={<UdacityIcon />} text="Cloud Developer using M" w={164} sep shade />
              <Tab icon={<StackIcon />} text="Azure Function, Service b" w={165} sep shade />
              <Tab icon={<MsIcon />} text="az functionapp | Microsof" w={165} sep shade />
              <Tab icon={<MsIcon />} text="Arbeiten mit Azure Funct" w={165} shade />
              <Tab icon={<UdacityIcon />} text="Cloud Developer using M" w={164} active accent="h-[2px] bg-[#f0764b]" shade />
              <div className="ml-[9px] flex"><PlusIcon /></div>
            </div>
            <Toolbar secure>
              <Fit w={1203} className="[mask-image:linear-gradient(to_right,black_97%,transparent)]">
                https://classroom.<span className="text-[#3d3c3a]">udacity.com</span>
                /nanodegrees/nd081/parts/3802ca8c-3592-4cd9-a55b-7a4b30942e6c/modules/a2800368-5e8f-48d0-bf99-9eb512d0eae1/lessons/c9c7a4de-0f
              </Fit>
            </Toolbar>
            <ClassroomPage />
          </div>
        </div>
      </div>
    </div>
  );
}
